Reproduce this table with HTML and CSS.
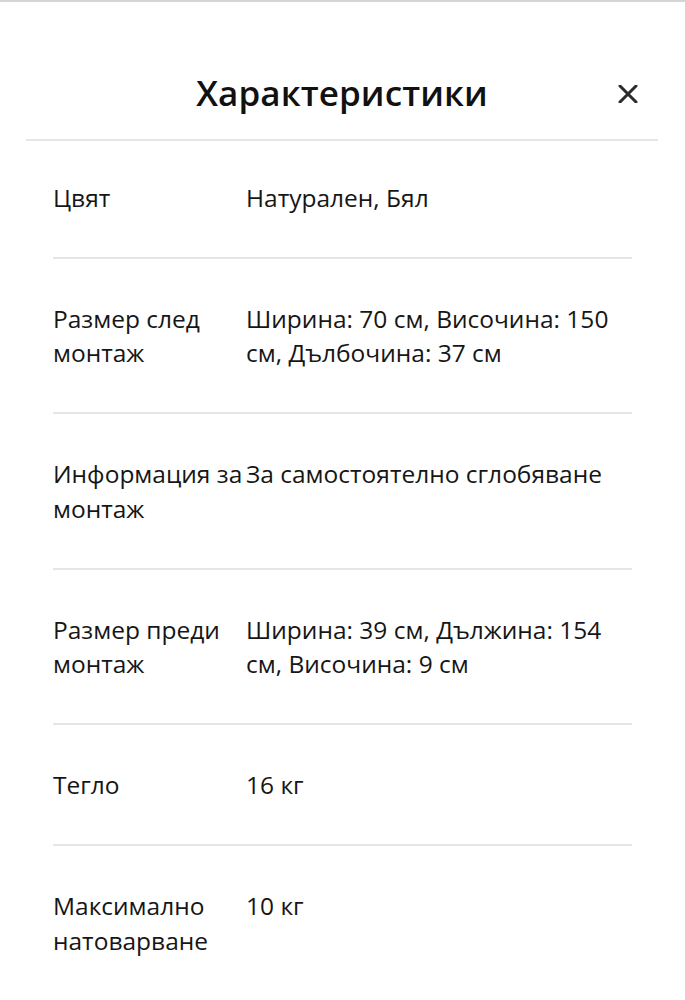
FILE: index.html
```html
<!DOCTYPE html>
<html lang="bg">
<head>
<meta charset="utf-8">
<title>Характеристики</title>
<link rel="stylesheet" href="styles.css">
</head>
<body>
<div class="sheet">
  <header class="head">
    <span class="spacer"></span>
    <h1 class="title">Характеристики</h1>
    <button class="close" aria-label="Затвори">
      <svg width="20" height="18" viewBox="0 0 20 18"><path d="M2 1 L18 17 M18 1 L2 17" stroke="#2b2b2b" stroke-width="3" stroke-linecap="round"/></svg>
    </button>
  </header>
  <dl class="specs">
    <div class="row"><dt>Цвят</dt><dd>Натурален, Бял</dd></div>
    <div class="row"><dt>Размер след монтаж</dt><dd>Ширина: 70 см, Височина: 150 см, Дълбочина: 37 см</dd></div>
    <div class="row"><dt>Информация за монтаж</dt><dd>За самостоятелно сглобяване</dd></div>
    <div class="row"><dt>Размер преди монтаж</dt><dd>Ширина: 39 см, Дължина: 154 см, Височина: 9 см</dd></div>
    <div class="row"><dt>Тегло</dt><dd>16 кг</dd></div>
    <div class="row"><dt>Максимално натоварване</dt><dd>10 кг</dd></div>
  </dl>
</div>
</body>
</html>
```

FILE: styles.css
```css
* { box-sizing: border-box; }
html, body { margin: 0; padding: 0; background: #fff; }
body {
  font-family: "Open Sans", "Noto Sans", sans-serif;
  color: #161616;
  border-top: 2px solid #d4d4d4;
}
.sheet { width: 685px; }
.head {
  margin: 0 27px 0 26px;
  height: 139px;
  display: grid;
  grid-template-columns: 1fr auto 1fr;
  align-items: start;
  padding-top: 67px;
  border-bottom: 2px solid #e6e6e8;
}
.title {
  margin: 0;
  font-size: 35px;
  line-height: 48px;
  font-weight: 600;
  color: #111;
  letter-spacing: 0.1px;
}
.close {
  justify-self: end;
  margin: 16px 20px 0 0;
  padding: 0;
  border: 0;
  background: none;
  width: 20px;
  height: 18px;
  display: block;
}
.close svg { display: block; }
.specs {
  margin: 0 53px;
  padding-top: 0;
}
.row {
  display: grid;
  grid-template-columns: 193px 1fr;
  padding: 43px 0 41.5px;
  border-bottom: 2px solid #e4e4ea;
  font-size: 24.5px;
  line-height: 34.5px;
}
.row:first-child { padding-top: 39.5px; }
.row:last-child { border-bottom: 0; }
dt, dd { margin: 0; }
dd { padding-right: 8px; }
```
